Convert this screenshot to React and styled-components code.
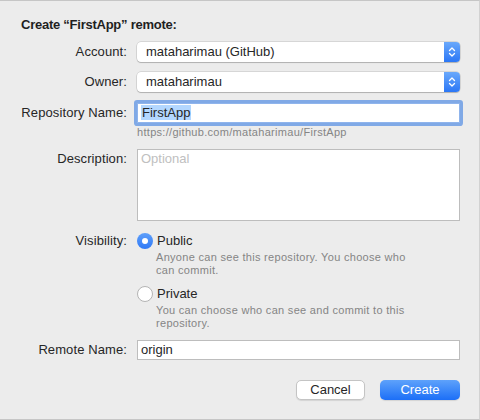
import React from "react";
import styled, { createGlobalStyle } from "styled-components";

const Global = createGlobalStyle`
  html, body { margin: 0; padding: 0; background: #ececec; }
  body { font-family: "Liberation Sans", Arial, sans-serif; color: #262626; }
`;

const Sheet = styled.div`
  width: 480px;
  height: 420px;
  box-sizing: border-box;
  background: #ececec;
  border-top: 1px solid #c6c6c6;
  border-right: 1px solid #d2d2d2;
  border-bottom: 1px solid #c6c6c6;
  padding: 16px 0 0 21px;
`;

const Title = styled.div`
  font-size: 13px;
  font-weight: bold;
  line-height: 16px;
  letter-spacing: -0.25px;
  color: #1f1f1f;
`;

const Row = styled.div`
  display: grid;
  grid-template-columns: 106px 323px;
  column-gap: 10px;
  align-items: ${(p) => p.$align || "center"};
  margin-top: ${(p) => p.$top || 0}px;
`;

const Label = styled.div`
  font-size: 13px;
  line-height: 16px;
  text-align: right;
  letter-spacing: 0.1px;
  color: #262626;
  padding-top: ${(p) => p.$pad || 0}px;
`;

const Select = styled.div`
  display: flex;
  height: 20px;
  box-sizing: border-box;
  border-radius: 4px;
  background: #fff;
  box-shadow: 0 0 0 0.5px rgba(0, 0, 0, 0.18), 0 1px 1px rgba(0, 0, 0, 0.18);
  overflow: hidden;
`;

const SelectText = styled.div`
  flex: 1;
  font-size: 13px;
  line-height: 20px;
  padding-left: 9px;
`;

const Stepper = styled.div`
  width: 16px;
  display: flex;
  align-items: center;
  justify-content: center;
  background: linear-gradient(#6aa9fb, #2b77f6);
`;

const Input = styled.div`
  height: ${(p) => p.$h || 20}px;
  box-sizing: border-box;
  background: #fff;
  border: 1px solid ${(p) => (p.$focus ? "#8fb4ec" : "#bdbdbd")};
  box-shadow: ${(p) => (p.$focus ? "0 0 0 3px #80a9e6" : "none")};
  border-radius: ${(p) => (p.$focus ? "1px" : "0")};
  font-size: 13px;
  line-height: 18px;
  padding: 0 0 0 3px;
  color: ${(p) => (p.$placeholder ? "#c0c0c0" : "#262626")};
`;

const Selected = styled.span`
  background: #b3d7ff;
  padding: 0 1px;
`;

const Hint = styled.div`
  font-size: 11px;
  line-height: 13px;
  letter-spacing: 0.3px;
  color: #858585;
  margin-top: ${(p) => p.$top || 0}px;
  padding-left: ${(p) => p.$indent || 0}px;
`;

const Radio = styled.div`
  display: flex;
  align-items: center;
  gap: 4px;
  font-size: 13px;
  line-height: 16px;
  margin-top: ${(p) => p.$top || 0}px;
`;

const Dot = styled.span`
  width: 16px;
  height: 16px;
  box-sizing: border-box;
  border-radius: 50%;
  display: flex;
  align-items: center;
  justify-content: center;
  background: ${(p) => (p.$on ? "linear-gradient(#5e9ffa, #2f79f6)" : "#fff")};
  border: ${(p) => (p.$on ? "none" : "1px solid #b4b4b4")};
  &::after {
    content: "";
    display: ${(p) => (p.$on ? "block" : "none")};
    width: 6px;
    height: 6px;
    border-radius: 50%;
    background: #fff;
  }
`;

const Buttons = styled.div`
  display: flex;
  justify-content: flex-end;
  gap: 15px;
  width: 439px;
  margin-top: 20px;
`;

const Button = styled.button`
  width: ${(p) => p.$w}px;
  height: 20px;
  border-radius: 5px;
  font-family: inherit;
  font-size: 13px;
  line-height: 18px;
  padding: 0;
  border: ${(p) => (p.$primary ? "none" : "1px solid #c4c4c4")};
  background: ${(p) => (p.$primary ? "linear-gradient(#5ea2fb, #1c6ff7)" : "#fff")};
  color: ${(p) => (p.$primary ? "#fff" : "#262626")};
  box-shadow: 0 1px 1px rgba(0, 0, 0, 0.1);
`;

const Chevrons = () => (
  <svg width="8" height="12" viewBox="0 0 8 12">
    <path d="M1.5 4.5 L4 2 L6.5 4.5 M1.5 7.5 L4 10 L6.5 7.5" fill="none" stroke="#fff" strokeWidth="1.3" strokeLinecap="round" strokeLinejoin="round" />
  </svg>
);

const Popup = ({ value }) => (
  <Select>
    <SelectText>{value}</SelectText>
    <Stepper>
      <Chevrons />
    </Stepper>
  </Select>
);

export default function App() {
  return (
    <>
      <Global />
      <Sheet>
        <Title>Create “FirstApp” remote:</Title>

        <Row $top={9}>
          <Label>Account:</Label>
          <Popup value="mataharimau (GitHub)" />
        </Row>

        <Row $top={10}>
          <Label>Owner:</Label>
          <Popup value="mataharimau" />
        </Row>

        <Row $top={11}>
          <Label>Repository Name:</Label>
          <Input $focus>
            <Selected>FirstApp</Selected>
          </Input>
        </Row>
        <Row>
          <div />
          <Hint $top={3}>https://github.com/mataharimau/FirstApp</Hint>
        </Row>

        <Row $top={10} $align="start">
          <Label $pad={2}>Description:</Label>
          <Input $h={72} $placeholder>
            Optional
          </Input>
        </Row>

        <Row $top={12} $align="start">
          <Label>Visibility:</Label>
          <div>
            <Radio>
              <Dot $on />
              Public
            </Radio>
            <Hint $top={2} $indent={19}>
              Anyone can see this repository. You choose who
              <br />
              can commit.
            </Hint>
            <Radio $top={9}>
              <Dot />
              Private
            </Radio>
            <Hint $top={2} $indent={19}>
              You can choose who can see and commit to this
              <br />
              repository.
            </Hint>
          </div>
        </Row>

        <Row $top={10}>
          <Label>Remote Name:</Label>
          <Input>origin</Input>
        </Row>

        <Buttons>
          <Button $w={69}>Cancel</Button>
          <Button $w={80} $primary>
            Create
          </Button>
        </Buttons>
      </Sheet>
    </>
  );
}
